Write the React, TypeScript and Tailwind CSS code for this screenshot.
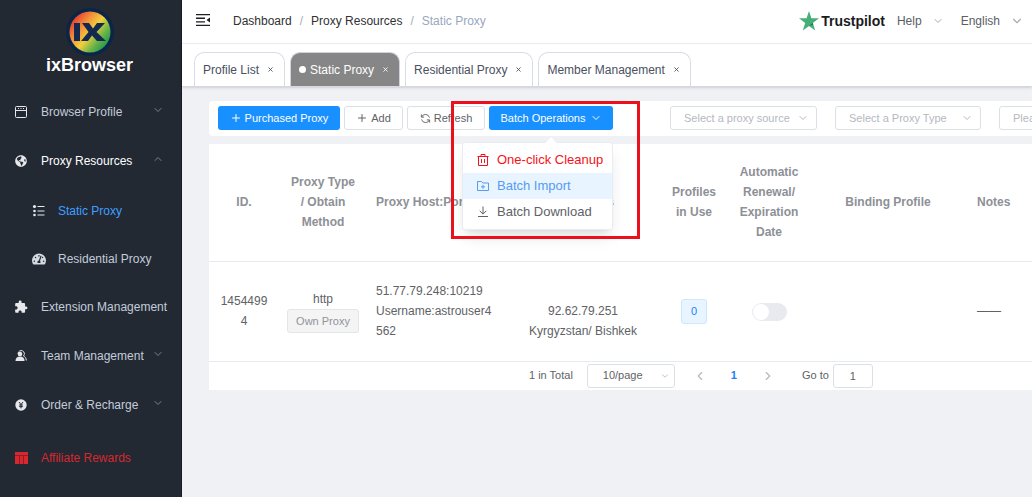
import React from 'react';
import { ChevronDown, ChevronLeft, ChevronRight, ChevronUp, Plus, X } from 'lucide-react';
import { FaGlobeAmericas, FaTachometerAlt } from 'react-icons/fa';
import { MdExtension } from 'react-icons/md';

const Logo = () => (
  <svg viewBox="0 0 48 48" className="size-12" aria-hidden="true">
    <defs>
      <linearGradient id="rainbow" x1="0" y1="0.1" x2="1" y2="0.9">
        <stop offset="0.1" stopColor="#e5402f" />
        <stop offset="0.32" stopColor="#f2913a" />
        <stop offset="0.52" stopColor="#f4cf3c" />
        <stop offset="0.72" stopColor="#6db548" />
        <stop offset="0.95" stopColor="#11914f" />
      </linearGradient>
    </defs>
    <circle cx="24" cy="24" r="24" fill="#0b2548" />
    <circle cx="24" cy="24" r="20.5" fill="url(#rainbow)" />
    <path d="M8 15h6v18H8z" fill="#14294f" />
    <path
      d="M16 15h7l4 5.500 4-5.500h8L30.500 24 40 33h-9l-5-5.500-4 5.500h-7l7.500-9z"
      fill="#14294f"
    />
  </svg>
);

const BrowserIcon = () => (
  <svg viewBox="0 0 14 14" className="size-3.5" fill="none" stroke="currentColor">
    <rect x="1.500" y="1.500" width="11" height="11" rx="1" />
    <path d="M1.500 5.500h11M4 3.500h1M6.500 3.500h1M9 3.500h1" />
  </svg>
);

const ListIcon = () => (
  <svg viewBox="0 0 14 14" className="size-3.5" fill="currentColor">
    <circle cx="2.500" cy="2.500" r="1.600" />
    <circle cx="2.500" cy="7" r="1.300" />
    <circle cx="2.500" cy="11" r="1.300" />
    <path d="M5.500 2h7v1h-7zM5.500 6.500h7v1h-7zM5.500 10.500h7v1h-7z" />
  </svg>
);

const TeamIcon = () => (
  <svg viewBox="0 0 14 14" className="size-3.5" fill="currentColor">
    <path
      d="M4 4.500a3.200 3.200 0 1 1 5.500 2.500c1.700.8 2.700 2 2.800 4.500"
      fill="none"
      stroke="currentColor"
    />
    <circle cx="6" cy="5" r="2.300" />
    <path d="M1.500 12c0-3 1.500-4.500 4.500-4.500s4.500 1.500 4.500 4.500z" />
  </svg>
);

const CoinIcon = () => (
  <svg viewBox="0 0 14 14" className="size-3.5">
    <circle cx="7" cy="7" r="5.700" fill="currentColor" />
    <path d="M5 4l2 2.500L9 4M7 6.500V10.300M5.200 7h3.600M5.200 8.600h3.600" fill="none" stroke="#222933" />
  </svg>
);

const RewardsIcon = () => (
  <svg viewBox="0 0 14 14" className="size-3.5">
    <path d="M0 1h13v12H0z" fill="currentColor" />
    <path d="M0 4.500h13M4.500 4.500V13M8.500 4.500V13" stroke="#8e1e24" fill="none" />
  </svg>
);

const FoldIcon = () => (
  <svg viewBox="0 0 14 14" className="size-3.5" fill="#1d1f23">
    <path d="M0 1h14v1.300H0zM0 4.600h9v1.300H0zM0 8.200h9v1.300H0zM0 11.800h14v1.300H0zM14 4.400v5.200L10.500 7z" />
  </svg>
);

const RefreshIcon = () => (
  <svg viewBox="0 0 12 12" className="size-[11px]" fill="none" stroke="currentColor">
    <path d="M1.500 1.500v3h3M10.500 10.500v-3h-3M1.700 4.500A4.500 4.500 0 0 1 10.300 5M10.300 7.500A4.500 4.500 0 0 1 1.700 7" />
  </svg>
);

const TrashIcon = () => (
  <svg viewBox="0 0 12 12" className="size-3" fill="none" stroke="currentColor">
    <path d="M.5 2.500h11M4 2.500v-2h4v2M1.500 2.500v9h9v-9M4.500 5v4M7.500 5v4" />
  </svg>
);

const FolderAddIcon = () => (
  <svg viewBox="0 0 12 12" className="size-3" fill="none" stroke="currentColor">
    <path d="M.5 1.500h4L6 3h5.500v7.500H.5zM6 4.800v4M4 6.800h4" />
  </svg>
);

const DownloadIcon = () => (
  <svg viewBox="0 0 12 12" className="size-3" fill="none" stroke="currentColor">
    <path d="M1 10.500h10M6 .5v7.500M2.700 4.800L6 8.100l3.300-3.300" />
  </svg>
);

const TrustpilotStar = () => (
  <svg viewBox="0 0 20 20" className="size-5" aria-hidden="true">
    <path d="M10 0l2.400 7.300H20l-6.200 4.600L16.200 19.500 10 14.900 3.800 19.500l2.400-7.600L0 7.300h7.600z" fill="#46ae78" />
    <path d="M14.300 13.400l-.5-1.500L10 14.900z" fill="#1d6b45" />
  </svg>
);

interface MenuItem {
  label: string;
  icon: React.ReactNode;
  arrow?: 'up' | 'down';
  active?: boolean;
}

const topItems: MenuItem[] = [
  { label: 'Browser Profile', icon: <BrowserIcon />, arrow: 'down' },
  { label: 'Proxy Resources', icon: <FaGlobeAmericas className="size-3" />, arrow: 'up', active: true },
];

const bottomItems: MenuItem[] = [
  { label: 'Extension Management', icon: <MdExtension className="size-3.5" /> },
  { label: 'Team Management', icon: <TeamIcon />, arrow: 'down' },
  { label: 'Order & Recharge', icon: <CoinIcon />, arrow: 'down' },
];

const tabs = [
  { label: 'Profile List' },
  { label: 'Static Proxy', active: true },
  { label: 'Residential Proxy' },
  { label: 'Member Management' },
];

const SidebarLink = ({ label, icon, arrow, active }: MenuItem) => (
  <a
    href="#"
    className={`flex h-[49px] items-center pr-[17px] pl-3.5 whitespace-nowrap ${
      active ? 'text-white' : 'text-[#c3ccd9]'
    }`}
  >
    <span className="mr-[13px] flex w-3.5 shrink-0 justify-center text-[#e6e8eb]">{icon}</span>
    {label}
    {arrow && (
      <span className="ml-auto pb-1 text-[#7b828d]">
        {arrow === 'up' ? (
          <ChevronUp className="size-3" strokeWidth={2} />
        ) : (
          <ChevronDown className="size-3" strokeWidth={2} />
        )}
      </span>
    )}
  </a>
);

const Sidebar = () => (
  <aside className="w-[182px] shrink-0 border-r border-[#161c24] bg-[#222933]">
    <div className="flex h-[87px] flex-col items-center pt-2 pr-0.5">
      <Logo />
      <span className="text-lg leading-[18px] font-bold text-white">ixBrowser</span>
    </div>
    <nav>
      {topItems.map((item) => (
        <SidebarLink key={item.label} {...item} />
      ))}
      <div className="-mb-px pt-0.5">
        <a href="#" className="flex h-12 items-center gap-3 pl-8 text-[#409eff]">
          <span className="text-[#e6e8eb]"><ListIcon /></span>
          Static Proxy
        </a>
        <a href="#" className="flex h-12 items-center gap-3 pl-8 text-[#c3ccd9]">
          <FaTachometerAlt className="size-3.5 text-[#d5dae1]" />
          Residential Proxy
        </a>
      </div>
      {bottomItems.map((item) => (
        <SidebarLink key={item.label} {...item} />
      ))}
      <a href="#" className="mt-1 flex h-[49px] items-center gap-3 pl-[15px] text-[#d6282e]">
        <RewardsIcon />
        Affiliate Rewards
      </a>
    </nav>
  </aside>
);

const Header = () => (
  <header className="flex h-11 items-center border-b border-[#eeeff2] bg-white pr-2 pb-0.5 pl-3.5">
    <button type="button" aria-label="Collapse menu" className="pb-0.5">
      <FoldIcon />
    </button>
    <nav aria-label="Breadcrumb" className="ml-[23px] flex gap-2 text-[#303133]">
      <a href="#">Dashboard</a>
      <span className="text-[#a8abb2]">/</span>
      <a href="#">Proxy Resources</a>
      <span className="text-[#a8abb2]">/</span>
      <span className="text-[#97a8be]">Static Proxy</span>
    </nav>
    <a href="#" className="ml-auto flex items-center gap-0.5">
      <TrustpilotStar />
      <span className="text-sm font-bold text-[#1c1c1c]">Trustpilot</span>
    </a>
    <button type="button" className="ml-3 flex items-center gap-2.5 text-[#5a5e66]">
      Help
      <ChevronDown className="size-3 text-[#a8abb2]" />
    </button>
    <button type="button" className="ml-[17px] flex items-center gap-2.5 text-[#5a5e66]">
      English
      <ChevronDown className="size-3.5 text-[#a8abb2]" />
    </button>
  </header>
);

const TabBar = () => (
  <div className="flex gap-[5px] border-b border-[#d4d8e0] bg-white pt-2 pl-3 shadow-sm">
    {tabs.map((tab) => (
      <div
        key={tab.label}
        className={`flex h-[34px] items-center gap-1.5 rounded-t-[10px] border border-b-0 px-2 whitespace-nowrap ${
          tab.active
            ? 'border-[#d0d3dc] bg-[#868686] text-white'
            : 'border-[#d8dce5] bg-white text-[#495060]'
        }`}
      >
        {tab.active && <span className="-mr-0.5 size-[7px] rounded-full bg-white" />}
        <a href="#">{tab.label}</a>
        <button type="button" aria-label={`Close ${tab.label}`} className="px-0.5">
          <X className="size-[7px]" strokeWidth={3} />
        </button>
      </div>
    ))}
  </div>
);

const FilterSelect = ({ label, className }: { label: string; className: string }) => (
  <div className={`relative shrink-0 ${className}`}>
    <select
      aria-label={label}
      className="h-6 w-full appearance-none rounded-[3px] border border-[#dcdfe6] bg-white pr-6 pl-[13px] text-[11px] text-[#b4b8c0]"
    >
      <option>{label}</option>
    </select>
    <ChevronDown className="pointer-events-none absolute top-1.5 right-2 size-3 text-[#b4b8c0]" />
  </div>
);

const BatchMenu = () => (
  <div className="relative shrink-0">
    <button
      type="button"
      aria-expanded="true"
      className="flex h-6 w-[124px] items-center justify-center gap-1 rounded-[3px] bg-[#1890ff] text-[11px] font-medium text-white"
    >
      Batch Operations
      <ChevronDown className="size-3" />
    </button>
    <div className="absolute top-9 right-0 z-10 w-[151px] rounded-[3px] border border-[#e9ecf2] bg-white py-1 text-[13px] shadow-lg">
      <span className="absolute -top-1 left-[84px] size-2 rotate-45 bg-white" />
      <button type="button" className="flex h-[26px] w-full items-center gap-2 pl-3.5 text-[#f5111c]">
        <TrashIcon />
        One-click Cleanup
      </button>
      <button type="button" className="flex h-[26px] w-full items-center gap-2 bg-[#e8f4ff] pl-3.5 text-[#559bf2]">
        <FolderAddIcon />
        Batch Import
      </button>
      <button type="button" className="flex h-[26px] w-full items-center gap-2 pl-3.5 text-[#606266]">
        <DownloadIcon />
        Batch Download
      </button>
    </div>
    {/* highlight frame around the menu */}
    <div className="pointer-events-none absolute -top-[5px] -left-[38px] z-20 h-[138px] w-[189px] border-3 border-[#eb111c]" />
  </div>
);

const Toolbar = () => (
  <div className="flex rounded-l-[4px] bg-white pt-[5px] pb-1.5 pl-[9px] whitespace-nowrap">
    <div className="flex gap-1 text-[11px] text-[#606266]">
      <button
        type="button"
        className="flex h-6 w-[122px] items-center justify-center gap-[3px] rounded-[3px] bg-[#1890ff] font-medium text-white"
      >
        <Plus className="size-3" />
        Purchased Proxy
      </button>
      <button
        type="button"
        className="flex h-6 w-[59px] items-center justify-center gap-[3px] rounded-[3px] border border-[#dcdfe6]"
      >
        <Plus className="size-3" />
        Add
      </button>
      <button
        type="button"
        className="flex h-6 w-[78px] items-center justify-center gap-[3px] rounded-[3px] border border-[#dcdfe6]"
      >
        <RefreshIcon />
        Refresh
      </button>
      <BatchMenu />
    </div>
    <div className="ml-[57px] flex gap-[18px]">
      <FilterSelect label="Select a proxy source" className="w-[147px]" />
      <FilterSelect label="Select a Proxy Type" className="w-[146px]" />
      <FilterSelect label="Please select" className="w-[146px]" />
    </div>
  </div>
);

const ProxyTable = () => (
  <table className="w-full table-fixed text-center leading-5 text-[#606266]">
    <colgroup>
      <col className="w-[70px]" />
      <col className="w-[88px]" />
      <col className="w-[142px]" />
      <col className="w-[148px]" />
      <col className="w-[74px]" />
      <col className="w-[76px]" />
      <col className="w-[162px]" />
      <col />
    </colgroup>
    <thead>
      <tr className="h-[117px] border-b border-[#e6eaf1] text-[#8d9096]">
        <th className="px-2">ID.</th>
        <th className="px-3">Proxy Type / Obtain Method</th>
        <th className="pr-3 pl-[9px] text-left">Proxy Host:Port</th>
        <th className="px-2">IP Address</th>
        <th className="px-3">Profiles in Use</th>
        <th className="px-1">Automatic Renewal/ Expiration Date</th>
        <th className="px-2">Binding Profile</th>
        <th className="px-2 text-left">Notes</th>
      </tr>
    </thead>
    <tbody>
      <tr className="h-[100px] border-b border-[#e6eaf1]">
        <td className="px-[9px] break-all">14544994</td>
        <td className="px-2">
          <p>http</p>
          <span className="inline-flex h-6 items-center rounded-[3px] border border-[#e4e5e8] bg-[#f4f4f5] px-2 text-[11px] text-[#909399]">
            Own Proxy
          </span>
        </td>
        <td className="pr-3 pl-[9px] text-left break-all">
          <p>51.77.79.248:10219</p>
          <p>Username:astrouser4562</p>
        </td>
        <td className="px-2 pt-5">
          <p>92.62.79.251</p>
          <p>Kyrgyzstan/ Bishkek</p>
        </td>
        <td className="px-2">
          <span className="inline-flex h-[25px] w-[26px] items-center justify-center rounded-[3px] border border-[#cfe6ff] bg-[#e8f4ff] align-middle text-[11px] text-[#1e80ff]">
            0
          </span>
        </td>
        <td className="px-2">
          <input
            type="checkbox"
            role="switch"
            aria-label="Automatic renewal"
            className="h-[18px] w-[35px] appearance-none rounded-full bg-[#e9eaef] p-px align-middle before:block before:size-4 before:rounded-full before:bg-white checked:bg-[#1890ff] checked:before:ml-auto"
          />
        </td>
        <td />
        <td className="px-2 text-left">——</td>
      </tr>
    </tbody>
  </table>
);

const Pagination = () => (
  <div className="flex items-center pt-0.5 pb-0.5 pl-80 text-[11px] whitespace-nowrap text-[#606266]">
    <span>1 in Total</span>
    <div className="relative ml-3.5 w-[88px]">
      <select
        aria-label="Rows per page"
        className="h-6 w-full appearance-none rounded-[3px] border border-[#dcdfe6] bg-white pl-[15px]"
      >
        <option>10/page</option>
      </select>
      <ChevronDown className="pointer-events-none absolute top-[7px] right-[5px] size-2.5 text-[#b4b8c0]" />
    </div>
    <button type="button" aria-label="Previous page" className="ml-[18px] text-[#b4b8c0]">
      <ChevronLeft className="size-3.5" />
    </button>
    <button type="button" className="ml-6 font-bold text-[#1e80ff]">1</button>
    <button type="button" aria-label="Next page" className="ml-6 text-[#b4b8c0]">
      <ChevronRight className="size-3.5" />
    </button>
    <label htmlFor="goto" className="ml-[27px]">Go to</label>
    <input
      id="goto"
      defaultValue="1"
      className="ml-1 h-6 w-10 rounded-[3px] border border-[#dcdfe6] bg-white text-center"
    />
  </div>
);

const App = () => (
  <div className="flex min-h-screen overflow-hidden bg-[#eff1f5] font-['Liberation_Sans',Arial,sans-serif] text-xs">
    <Sidebar />
    <div className="min-w-0 flex-1">
      <Header />
      <TabBar />
      <main className="overflow-hidden pt-3.5 pl-[27px]">
        <Toolbar />
        <section className="mt-2 bg-white">
          <ProxyTable />
          <Pagination />
        </section>
      </main>
    </div>
  </div>
);

export default App;
